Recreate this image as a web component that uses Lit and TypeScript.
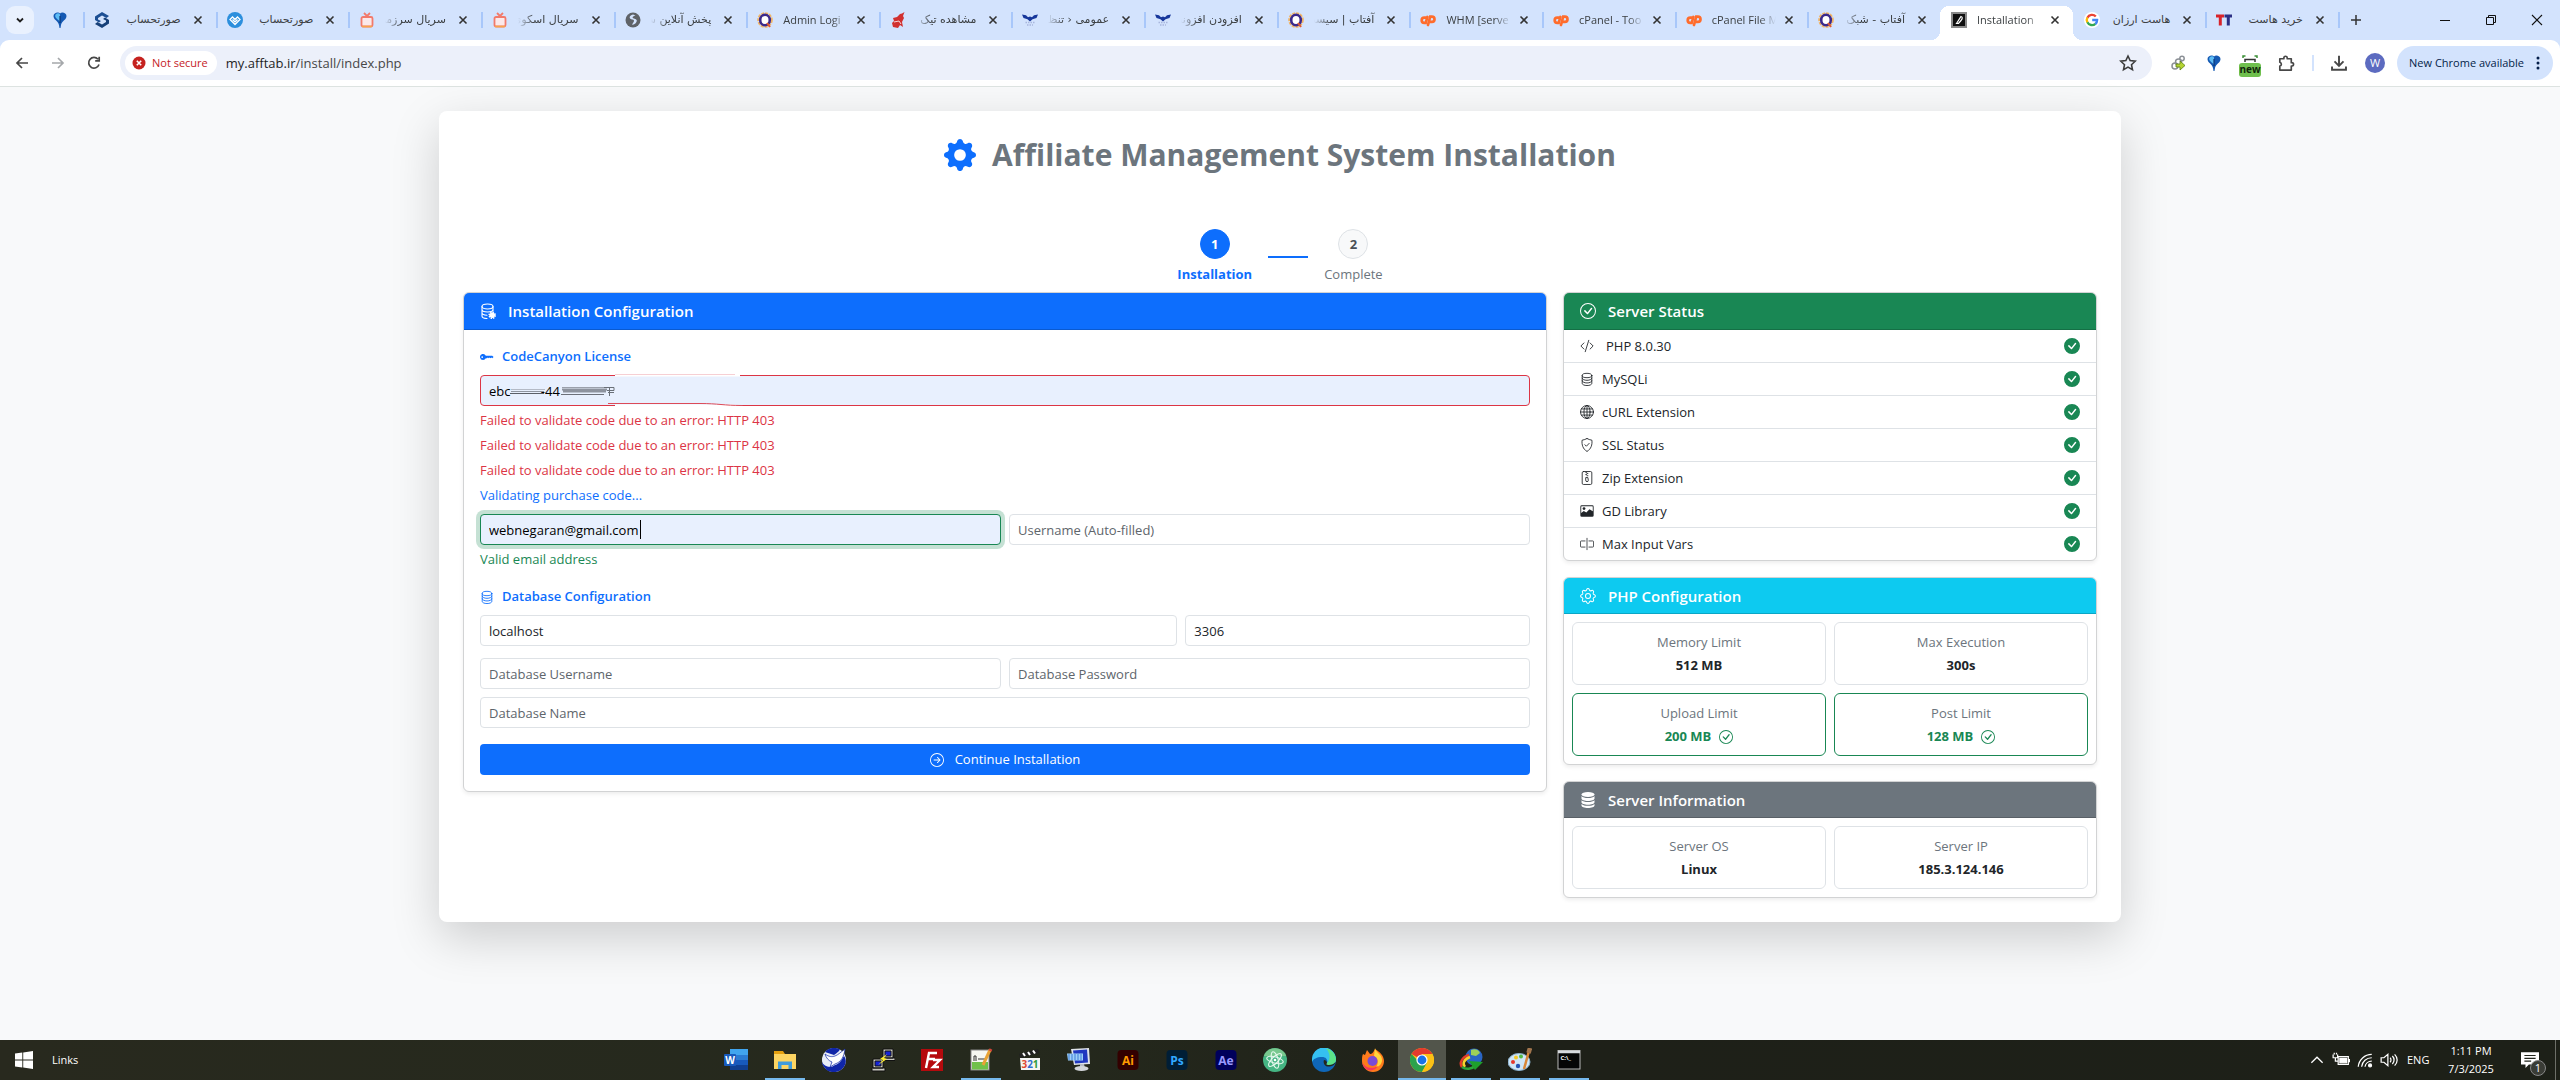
import { LitElement, html, svg, css, nothing, TemplateResult, SVGTemplateResult } from "lit";
import { customElement, property } from "lit/decorators.js";
import { classMap } from "lit/directives/class-map.js";

type Glyph = SVGTemplateResult;

const GEAR =
  "M9.405 1.05c-.413-1.4-2.397-1.4-2.81 0l-.1.34a1.464 1.464 0 0 1-2.105.872l-.31-.17c-1.283-.698-2.686.705-1.987 1.987l.169.311c.446.82.023 1.841-.872 2.105l-.34.1c-1.4.413-1.4 2.397 0 2.81l.34.1a1.464 1.464 0 0 1 .872 2.105l-.17.31c-.698 1.283.705 2.686 1.987 1.987l.311-.169a1.464 1.464 0 0 1 2.105.872l.1.34c.413 1.4 2.397 1.4 2.81 0l.1-.34a1.464 1.464 0 0 1 2.105-.872l.31.17c1.283.698 2.686-.705 1.987-1.987l-.169-.311a1.464 1.464 0 0 1 .872-2.105l.34-.1c1.4-.413 1.4-2.397 0-2.81l-.34-.1a1.464 1.464 0 0 1-.872-2.105l.17-.31c.698-1.283-.705-2.686-1.987-1.987l-.311.169a1.464 1.464 0 0 1-2.105-.872z";

const stroke = (inner: Glyph, w = 1) =>
  svg`<g fill="none" stroke="currentColor" stroke-width=${w} stroke-linecap="round" stroke-linejoin="round">${inner}</g>`;

/* Icons of the installer page, on a 16 unit grid. */
const ui: Record<string, Glyph> = {
  gearFill: svg`<path fill="currentColor" fill-rule="evenodd" d=${GEAR + "M8 10.93a2.929 2.929 0 1 1 0-5.86 2.929 2.929 0 0 1 0 5.86z"}/>`,
  gear: svg`<g transform="translate(.6 .6) scale(.925)" fill="none" stroke="currentColor" stroke-width="1.1"><path d=${GEAR}/><circle cx="8" cy="8" r="2.7"/></g>`,
  key: svg`<path fill="currentColor" d="M3.5 11.5a3.5 3.5 0 1 1 3.163-5H14L15.5 8 14 9.5l-1-1-1 1-1-1-1 1-1-1-1 1H6.663a3.5 3.5 0 0 1-3.163 2M2.5 9a1 1 0 1 0 0-2 1 1 0 0 0 0 2"/>`,
  database: stroke(svg`<ellipse cx="8" cy="4" rx="5.5" ry="2.5"/><path d="M2.5 4v9c0 1.4 2.5 2.5 5.5 2.5s5.5-1.1 5.5-2.5V4M2.5 7c0 1.4 2.5 2.5 5.5 2.5s5.5-1.1 5.5-2.5M2.5 10c0 1.4 2.5 2.5 5.5 2.5s5.5-1.1 5.5-2.5"/>`),
  databaseGear: svg`${stroke(svg`<ellipse cx="7.5" cy="3.5" rx="5.5" ry="2.5"/><path d="M2 3.500v9.500c0 1.300 2.200 2.400 5 2.500M13 3.500v4.500M2 6.500c0 1.400 2.500 2.500 5.500 2.500s5.500-1.100 5.500-2.500M2 9.800c0 1.300 2 2.300 5 2.500"/>`, 1.1)}<circle cx="12.2" cy="12.300" r="2.700" fill="currentColor"/><circle cx="12.200" cy="12.300" r="3" fill="none" stroke="currentColor" stroke-width="1.600" stroke-dasharray="1.400 .950"/>`,
  databaseFill: svg`<g fill="currentColor"><ellipse cx="8" cy="2.500" rx="6.500" ry="2.500"/><path d="M1.500 4v2.500C1.500 8 4.400 9 8 9s6.500-1 6.500-2.500V4C13.300 5.400 10.900 6 8 6s-5.300-.6-6.500-2M1.500 8.200v2.100c0 1.500 2.900 2.500 6.500 2.500s6.500-1 6.500-2.500V8.200C13.300 9.400 10.900 10 8 10s-5.300-.6-6.500-1.800M1.500 12v1.500C1.500 15 4.400 16 8 16s6.500-1 6.500-2.500V12c-1.200 1.300-3.600 1.800-6.500 1.800S2.700 13.300 1.500 12"/></g>`,
  check: svg`<path fill="currentColor" d="M8 15A7 7 0 1 1 8 1a7 7 0 0 1 0 14m0 1A8 8 0 1 0 8 0a8 8 0 0 0 0 16"/><path fill="currentColor" d="M10.970 4.970l-.02.022L7.477 9.417 5.384 7.323a.75.75 0 0 0-1.060 1.060L6.970 11.030a.75.75 0 0 0 1.079-.02l3.992-4.990a.75.75 0 0 0-1.071-1.050z"/>`,
  checkFill: svg`<path fill="currentColor" d="M16 8A8 8 0 1 1 0 8a8 8 0 0 1 16 0m-3.970-3.030a.75.75 0 0 0-1.080.022L7.477 9.417 5.384 7.323a.75.75 0 0 0-1.060 1.060L6.970 11.030a.75.75 0 0 0 1.079-.02l3.992-4.990a.75.75 0 0 0-.01-1.050z"/>`,
  code: stroke(svg`<path d="M10 1.500l-4 13M4.500 4.500L1 8l3.500 3.500M11.500 4.500L15 8l-3.500 3.500"/>`),
  globe: stroke(svg`<circle cx="8" cy="8" r="7.400"/><ellipse cx="8" cy="8" rx="3.500" ry="7.400"/><path d="M8 .6v14.800M.6 8h14.800M1.700 4.500h12.600M1.700 11.500h12.600"/>`),
  shield: stroke(svg`<path d="M8 .6c1.500.9 3.500 1.600 5.600 1.900.6 5.200-.9 10-5.600 12.900C3.300 12.500 1.800 7.700 2.400 2.500 4.500 2.200 6.500 1.500 8 .6zM5.600 7.700l1.700 1.700 3.200-3.300"/>`),
  zip: stroke(svg`<rect x="2.500" y=".6" width="11" height="14.800" rx="1.500"/><path d="M6.600 1.500h1M8 2.800h1M6.600 4.100h1M8 5.400h1M7 7.500h2l.5 3.200a1.500 1.500 0 0 1-3 0z"/>`),
  image: svg`<path fill="currentColor" d="M2 1.500h12a1.600 1.600 0 0 1 1.600 1.600v10a1.600 1.600 0 0 1-1.600 1.600H2A1.600 1.600 0 0 1 .4 13.100v-10A1.600 1.600 0 0 1 2 1.500m0 1a.6.6 0 0 0-.6.6v7.300L4.300 8l2.900 1.700 3.600-3.700 3.800 2.300V3.100a.6.6 0 0 0-.6-.6z"/><circle cx="4.600" cy="5.200" r="1.600" fill="currentColor"/>`,
  cursor: stroke(svg`<path d="M5.800 4.500H1.500a1 1 0 0 0-1 1v5a1 1 0 0 0 1 1h4.300M10.200 4.500h4.300a1 1 0 0 1 1 1v5a1 1 0 0 1-1 1h-4.300M8 1.500v13"/>`, 0.9),
  arrow: svg`<path fill="currentColor" fill-rule="evenodd" d="M1 8a7 7 0 1 0 14 0A7 7 0 0 0 1 8m15 0A8 8 0 1 1 0 8a8 8 0 0 1 16 0M4.500 7.500a.5.5 0 0 0 0 1h5.793l-2.147 2.146a.5.5 0 0 0 .708.708l3-3a.5.5 0 0 0 0-.708l-3-3a.5.5 0 1 0-.708.708L10.293 7.500z"/>`,
};

/* Favicons in the tab strip, on a 16 unit grid. */
const favorb = svg`<circle cx="8" cy="8" r="6.800" fill="none" stroke="#f2b565" stroke-width="2" stroke-dasharray="3 1"/><ellipse cx="8" cy="8" rx="4.800" ry="5.300" fill="#fff" stroke="#3b2a8c" stroke-width="2.600"/><path d="M10 11l3 4" stroke="#e2592f" stroke-width="2"/>`;
const favcp = svg`<g fill="none" stroke="#ff6c2c" stroke-width="2.700" stroke-linecap="round"><path d="M6.500 5.700H4.300a2.600 2.600 0 0 0 0 5.200h1.400L7.400 5"/><path d="M8 13L10.200 4.600h1.700a2.600 2.600 0 0 1 0 5.200h-1.700"/></g>`;
const favtv = svg`<g fill="none" stroke="#f27a6b" stroke-width="1.800" stroke-linejoin="round"><rect x="2.500" y="5" width="11" height="9.500" rx="1.500" fill="#fbe9ea"/><path d="M5 1l3 3 3-3"/></g><path d="M3 14.500h10" stroke="#f7a54a" stroke-width="1.500"/>`;
const favwing = svg`<path fill="#17379b" d="M0 2.500l4 .8 2 2L8 4.500l2 .8 2-2 4-.8-1.500 3.500-4 1.200L8 9.500 5.500 7.200l-4-1.200z"/><path stroke="#a9b6dd" stroke-width="1.300" stroke-dasharray="1.500 1" d="M3.500 10.500h9M5 13h6"/>`;
const balloon = svg`<path fill="#1459b3" d="M8 1.500c1.500-2 6.500-1 6.500 2.500 0 4-4.500 4.500-5.500 9L8.500 16h-1L7 13C6 8.500 1.500 8 1.500 4 1.500.5 6.500-.5 8 1.500z"/><path fill="#5dbcf4" d="M8 2.500c-1-2-4.800-1.500-4.800 1.300C3.200 6.500 6 7 8 10z"/><path d="M8 4v7" stroke="#0a3576" stroke-width="1.200"/>`;
const fav: Record<string, Glyph> = {
  orb: favorb,
  cp: favcp,
  tv: favtv,
  wing: favwing,
  balloon,
  swap: svg`<path fill="#1c4f94" d="M8 0l7 4-2.500 2L8 3.500 4 6v1.500l3 1.500-2 1.500L1 8V4.500z"/><path fill="#164079" d="M8 16l-7-4 2.500-2L8 12.500l4-2.500V8.500L9 7l2-1.500L15 8v3.500z"/>`,
  heart: svg`<circle cx="8" cy="8" r="8" fill="#2c8fdd"/><path fill="none" stroke="#fff" stroke-width="1.300" d="M8 12.500L3 7.500 5.500 5 8 7.500 10.500 5 13 7.500zM8 10L5.500 7.500M8 10l2.500-2.500"/>`,
  globe: svg`<circle cx="8" cy="8" r="7.500" fill="#5f6368"/><path fill="#d3e3fd" d="M8 2.500c-3 .5-4 2.500-3 4 1.500 1.300 3.500.5 4 2 .3 1.600-1.500 2-1.800 4.500 2.800-.5 4.800-2.500 4.600-4.700C11 6.500 8 7 7.600 5.500 7.500 4 9.500 4 10.500 3.500z"/>`,
  red: svg`<path fill="#d1302f" d="M14.500 0L13 4l1 2-2 4 1 5-3-2-2 3-5-1-1-4 2-2-1-3 4-1 3-3 2-.5z"/><path d="M4 10l5-1 2 3" stroke="#fff" stroke-width=".8" fill="none"/>`,
  leaf: svg`<rect width="16" height="16" fill="#8a8a8a"/><rect x="2" y="2" width="12" height="12" fill="#101010"/><path d="M5.500 11.500L10 4.500c1.800.3 1.500 2.500 0 4L7.500 11.500zM7 9l2-3" fill="none" stroke="#fff" stroke-width="1.200"/>`,
  google: svg`<circle cx="8" cy="8" r="8" fill="#fff"/><g fill="none" stroke-width="2.400"><path stroke="#ea4335" d="M11.800 4.500A5.200 5.200 0 0 0 3.400 5.700"/><path stroke="#fbbc05" d="M3.400 5.500a5.200 5.200 0 0 0 0 5"/><path stroke="#34a853" d="M3.400 10.300a5.200 5.200 0 0 0 8 1.600"/><path stroke="#4285f4" d="M11.300 12A5.200 5.200 0 0 0 13.100 8H8.200"/></g>`,
  tt: svg`<path fill="#d8232a" d="M0 2.500h8v3H5.800v8H2.800v-8H0z"/><path fill="#2b2f85" d="M8.500 2.500H16v3h-2.200v8h-3v-8H8.500z"/>`,
};

interface Tab { icon: string; title: string; rtl?: boolean; cut?: boolean; active?: boolean }
const tabs: Tab[] = [
  { icon: "swap", title: "صورتحساب", rtl: true },
  { icon: "heart", title: "صورتحساب", rtl: true },
  { icon: "tv", title: "سریال سرزمی", rtl: true, cut: true },
  { icon: "tv", title: "سریال اسکوی", rtl: true, cut: true },
  { icon: "globe", title: "پخش آنلاین ش", rtl: true, cut: true },
  { icon: "orb", title: "Admin Logi", cut: true },
  { icon: "red", title: "مشاهده تیک", rtl: true, cut: true },
  { icon: "wing", title: "عمومی ‹ تنظ", rtl: true, cut: true },
  { icon: "wing", title: "افزودن افزونه", rtl: true, cut: true },
  { icon: "orb", title: "آفتاب | سیست", rtl: true, cut: true },
  { icon: "cp", title: "WHM [serve", cut: true },
  { icon: "cp", title: "cPanel - Too", cut: true },
  { icon: "cp", title: "cPanel File M", cut: true },
  { icon: "orb", title: "آفتاب - شبک", rtl: true, cut: true },
  { icon: "leaf", title: "Installation", cut: true, active: true },
  { icon: "google", title: "هاست ارزان", rtl: true },
  { icon: "tt", title: "خرید هاست", rtl: true },
];

const CLOSE = svg`<path d="M4.500 4.500l7 7M11.500 4.500l-7 7" stroke="#333" stroke-width="1.600" fill="none"/>`;

const pic = (g: Glyph, cls = "i16", box = 16): TemplateResult =>
  html`<svg class=${cls} viewBox="0 0 ${box} ${box}" aria-hidden="true">${g}</svg>`;

@customElement("browser-tabs")
class BrowserTabs extends LitElement {
  static styles = css`
    :host { display: block; }
    .strip { display: flex; align-items: center; height: 40px; background: #d3e3fd; }
    svg { display: block; flex: none; }
    .i16 { width: 16px; height: 16px; }
    button { border: 0; padding: 0; background: none; font: inherit; display: grid; place-items: center; }
    .search { width: 28px; height: 28px; margin-left: 6px; border-radius: 9px; background: #e9f1fe; }
    .pinned { width: 49px; padding-left: 2px; box-sizing: border-box; display: grid; place-items: center; }
    .tabs { flex: 1; display: flex; min-width: 0; height: 40px; }
    .tab { flex: 1 1 0; min-width: 0; display: flex; align-items: center; height: 40px; padding: 0 10px 0 11px; gap: 5px; position: relative; box-sizing: border-box; }
    .tab > svg { margin-right: 5px; }
    .tab::before { content: ""; position: absolute; left: 0; top: 12px; width: 2px; height: 16px; background: #a8c7fa; }
    .tab.active::before, .tab.active + .tab::before { display: none; }
    .tab.active { background: linear-gradient(#fff, #fff) 0 6px / 100% 34px no-repeat; clip-path: inset(0 -9px 0 -9px); }
    .tab.active::after { content: ""; position: absolute; z-index: -1; }
    .corner { position: absolute; top: 6px; width: 9px; height: 9px; }
    .corner.l { left: 0; background: radial-gradient(circle at 100% 100%, #fff 9px, #d3e3fd 9px); }
    .corner.r { right: 0; background: radial-gradient(circle at 0 100%, #fff 9px, #d3e3fd 9px); }
    .flare { position: absolute; bottom: 0; width: 9px; height: 9px; }
    .flare.l { left: -9px; background: radial-gradient(circle at 0 0, transparent 9px, #fff 9px); }
    .flare.r { right: -9px; background: radial-gradient(circle at 100% 0, transparent 9px, #fff 9px); }
    .title { flex: 1; min-width: 0; overflow: hidden; white-space: nowrap; font: 11px/20px "Open Sans", "Noto Sans", sans-serif; color: #3c4043; }
    .title.rtl { direction: rtl; font-family: "DejaVu Sans", sans-serif; padding-right: 4px; }
    .title.cut { mask-image: linear-gradient(to right, #000 75%, transparent); }
    .title.cut.rtl { mask-image: linear-gradient(to left, #000 75%, transparent); }
    .new { width: 34px; height: 40px; border-left: 2px solid #a8c7fa; border-image: linear-gradient(transparent 12px, #a8c7fa 12px, #a8c7fa 28px, transparent 28px) 1; }
    .win { display: flex; margin-left: 50px; }
    .win button { width: 46px; height: 40px; }
  `;
  render() {
    return html`<div class="strip">
      <button class="search" aria-label="Search tabs">${pic(svg`<path d="M5 6.500l3 3 3-3" fill="none" stroke="#1f1f1f" stroke-width="1.800"/>`)}</button>
      <span class="pinned">${pic(fav.balloon)}</span>
      <div class="tabs">
        ${tabs.map((t) => html`<div class=${classMap({ tab: true, active: !!t.active })}>
          ${t.active ? html`<i class="corner l"></i><i class="corner r"></i><i class="flare l"></i><i class="flare r"></i>` : nothing}
          ${pic(fav[t.icon])}
          <span class=${classMap({ title: true, rtl: !!t.rtl, cut: !!t.cut })}>${t.title}</span>
          <button aria-label="Close">${pic(CLOSE)}</button>
        </div>`)}
      </div>
      <button class="new" aria-label="New tab">${pic(svg`<path d="M8 3v10M3 8h10" stroke="#333" stroke-width="1.500"/>`)}</button>
      <div class="win">
        <button aria-label="Minimize">${pic(svg`<path d="M3 8.500h10" stroke="#111"/>`)}</button>
        <button aria-label="Restore">${pic(svg`<path d="M3.500 5.500h7v7h-7zM5.500 5.500v-2h7v7h-2" fill="none" stroke="#111"/>`)}</button>
        <button aria-label="Close window">${pic(svg`<path d="M3 3l10 10M13 3L3 13" stroke="#111" stroke-width="1.100"/>`)}</button>
      </div>
    </div>`;
  }
}

@customElement("browser-toolbar")
class BrowserToolbar extends LitElement {
  static styles = css`
    :host { display: block; font: 11px/20px "Open Sans", "Noto Sans", sans-serif; background: #d3e3fd; }
    .bar { display: flex; align-items: center; height: 46px; background: #fff; border-bottom: 1px solid #dde3e1; border-radius: 9px 9px 0 0; padding-right: 7px; }
    svg { display: block; flex: none; }
    .i16 { width: 16px; height: 16px; }
    .i18 { width: 18px; height: 18px; }
    button { border: 0; padding: 0; background: none; font: inherit; display: grid; place-items: center; }
    .nav { display: flex; margin-left: 4px; width: 116px; }
    .nav button { width: 36px; height: 34px; }
    .omni { flex: 1; display: flex; align-items: center; height: 34px; border-radius: 17px; background: #ecf0fa; padding: 0 15px 0 5px; }
    .chip { display: flex; align-items: center; gap: 5px; height: 24px; border-radius: 12px; background: #fff; color: #c5221f; padding: 0 9px 0 6px; font-weight: 500; }
    .url { flex: 1; margin-left: 9px; font-size: 13px; color: #474747; }
    .url b { font-weight: 400; color: #1f1f1f; }
    .ext { display: flex; align-items: center; margin-left: 8px; }
    .ext > * { width: 36px; height: 34px; display: grid; place-items: center; }
    .ext .sep { width: 17px; }
    .sep::before { content: ""; width: 2px; height: 16px; background: #d3e3fd; }
    .badge { position: relative; }
    .badge b { position: absolute; left: 7px; top: 17px; width: 22px; height: 14px; border-radius: 3px; background: #6fbf4d; color: #10250a; font: 700 10px/13px "Open Sans", sans-serif; text-align: center; }
    .me { width: 20px; height: 20px; border-radius: 50%; background: #5c6bc0; color: #fff; line-height: 20px; text-align: center; }
    .update { height: 34px; border-radius: 17px; background: #d3e3fd; color: #041e49; display: flex; align-items: center; gap: 6px; padding: 0 7px 0 12px; margin-left: 4px; font-weight: 500; }
  `;
  render() {
    const line = (d: string, c = "#474747") => svg`<path d=${d} fill="none" stroke=${c} stroke-width="1.700"/>`;
    return html`<div class="bar">
      <div class="nav">
        <button aria-label="Back">${pic(line("M14 8H3M8 3L3 8l5 5"))}</button>
        <button aria-label="Forward">${pic(line("M2 8h11M8 3l5 5-5 5", "#a5a8ab"))}</button>
        <button aria-label="Reload">${pic(line("M13 9.500A5.300 5.300 0 1 1 12 4.300M13.200 1.800v4H9.200"))}</button>
      </div>
      <div class="omni">
        <button class="chip">${pic(svg`<circle cx="8" cy="8" r="6.500" fill="#c5221f"/><path d="M5.800 5.800l4.400 4.400M10.200 5.800l-4.400 4.400" stroke="#fff" stroke-width="1.600"/>`)}<span>Not secure</span></button>
        <span class="url"><b>my.afftab.ir</b>/install/index.php</span>
        ${pic(svg`<path d="M8 1.800l1.900 4.100 4.500.5-3.300 3.100.9 4.500-4-2.300L4 14l.9-4.500L1.600 6.400l4.500-.5z" fill="none" stroke="#3c3c3c" stroke-width="1.400"/>`, "i18")}
      </div>
      <div class="ext">
        <span>${pic(svg`<g fill="none" stroke="#8b9096" stroke-width="1.500"><circle cx="5" cy="11" r="3"/><circle cx="8.500" cy="7" r="3"/><circle cx="12" cy="3.500" r="2.200"/></g><path d="M6 9h4V6l5 4.500-5 4.500v-3H6z" fill="#b5d432" stroke="#5a7d14" stroke-width=".8"/>`)}</span>
        <span>${pic(balloon)}</span>
        <span class="badge">${pic(svg`<path d="M1 3V1h2.500M12.500 1H15v2" fill="none" stroke="#3a8f36" stroke-width="1.500"/><path d="M3 7V4.500h10V7" fill="none" stroke="#333" stroke-width="1.500"/>`)}<b>new</b></span>
        <button aria-label="Extensions">${pic(svg`<path d="M2.500 4.200h3.600V3.500a1.500 1.500 0 0 1 3 0v.7h3.600v3.500h.5a1.500 1.500 0 0 1 0 3h-.5v3.600H2.500v-3.500a1.800 1.800 0 0 0 0-3.500z" fill="none" stroke="#474747" stroke-width="1.500" stroke-linejoin="round"/>`, "i18")}</button>
        <span class="sep"></span>
        <button aria-label="Downloads">${pic(svg`<path d="M8 1.500v8.500M4 6.500L8 10.500l4-4M1.800 11v3h12.400v-3" fill="none" stroke="#474747" stroke-width="1.700"/>`, "i18")}</button>
        <span><span class="me">W</span></span>
      </div>
      <button class="update"><span>New Chrome available</span>${pic(svg`<g fill="#041e49"><circle cx="8" cy="3" r="1.500"/><circle cx="8" cy="8" r="1.500"/><circle cx="8" cy="13" r="1.500"/></g>`)}</button>
    </div>`;
  }
}

@customElement("panel-card")
class PanelCard extends LitElement {
  @property() heading = "";
  @property() icon = "check";
  @property() tone = "primary";
  static styles = css`
    :host { display: block; }
    .card { border: 1px solid #d2d3d4; border-radius: 6px; background: #fff; box-shadow: 0 2px 4px rgba(0, 0, 0, .075); overflow: hidden; }
    .head { display: flex; align-items: center; gap: 12px; height: 36px; padding: 0 16px; color: #fff; font-weight: 600; border-bottom: 1px solid rgba(0, 0, 0, .176); box-sizing: border-box; }
    .head svg { width: 16px; height: 16px; flex: none; }
    h2 { margin: 0; font-size: 15px; line-height: 20px; font-weight: 600; }
    .primary { background: #0d6efd; height: 37px; }
    .success { background: #198754; height: 37px; }
    .info { background: #0dcaf0; }
    .secondary { background: #6c757d; }
  `;
  render() {
    return html`<section class="card">
      <header class="head ${this.tone}">${pic(ui[this.icon])}<h2>${this.heading}</h2></header>
      <slot></slot>
    </section>`;
  }
}

@customElement("install-page")
class InstallPage extends LitElement {
  static styles = css`
    :host { display: block; padding: 24px 12px; font: 13px/21px "Open Sans", "Noto Sans", sans-serif; color: #212529; }
    .sheet { max-width: 1634px; margin: 0 auto; padding: 24px; background: #fff; border-radius: 8px; box-shadow: 0 16px 48px rgba(0, 0, 0, .175); }
    svg { display: block; flex: none; }
    .i16 { width: 16px; height: 16px; }
    .i14 { width: 14px; height: 14px; }
    .i32 { width: 32px; height: 32px; color: #0d6efd; }
    .title { display: flex; justify-content: center; align-items: center; gap: 16px; height: 40px; margin-bottom: 54px; }
    h1 { margin: 0; font-size: 30px; line-height: 40px; font-weight: 700; color: #6c757d; }
    .steps { display: flex; justify-content: center; align-items: center; gap: 16px; margin-bottom: 7px; }
    .step { display: flex; flex-direction: column; align-items: center; gap: 5px; color: #6c757d; }
    .dot { width: 30px; height: 30px; box-sizing: border-box; border: 1px solid #dee2e6; border-radius: 50%; background: #f8f9fa; color: #495057; display: grid; place-items: center; font-weight: 700; }
    .step.on { color: #0d6efd; font-weight: 700; }
    .step.on .dot { background: #0d6efd; border-color: #0d6efd; color: #fff; }
    .link { width: 40px; height: 2px; background: #0d6efd; }
    .cols { display: grid; grid-template-columns: repeat(12, minmax(0, 1fr)); gap: 16px; align-items: start; }
    .main { grid-column: span 8; }
    .side { grid-column: span 4; display: grid; gap: 16px; }
    form { padding: 16px; }
    h3 { display: flex; align-items: center; gap: 8px; margin: 0 0 8px; font-size: 13px; line-height: 21px; font-weight: 600; color: #0d6efd; }
    .grid { display: grid; grid-template-columns: repeat(12, minmax(0, 1fr)); gap: 8px; align-items: start; }
    .w4 { grid-column: span 4; }
    .w6 { grid-column: span 6; }
    .w8 { grid-column: span 8; }
    .w12 { grid-column: span 12; }
    .first { margin-bottom: 16px; }
    .second { margin-bottom: 12px; }
    .third { margin-bottom: 16px; }
    .field { position: relative; }
    input { display: block; width: 100%; height: 31px; box-sizing: border-box; border: 1px solid #dee2e6; border-radius: 4px; padding: 4px 8px; background: #fff; font: inherit; color: #212529; outline: 0; }
    input::placeholder { color: #5e656b; opacity: 1; }
    .filled { background: #e8f0fe; color: #000; }
    .bad { border-color: #dc3545; }
    .good { border-color: #198754; box-shadow: 0 0 0 4px rgba(25, 135, 84, .25); }
    .caret { position: absolute; left: 160px; top: 6px; width: 1px; height: 19px; background: #000; }
    .smudge { position: absolute; left: 0; top: -4px; width: 300px; height: 39px; }
    .msg { margin: 4px 0 0; }
    .msg.bad { color: #dc3545; }
    .msg.busy { color: #0d6efd; }
    .msg.good { color: #198754; box-shadow: none; }
    .submit { width: 100%; height: 31px; border: 0; border-radius: 4px; background: #0d6efd; color: #fff; font: inherit; display: flex; align-items: center; justify-content: center; gap: 11px; }
    ul { list-style: none; margin: 0; padding: 0; }
    li { display: flex; align-items: center; gap: 8px; height: 32px; padding: 0 16px; border-bottom: 1px solid #dee2e6; }
    li:last-child { border-bottom: 0; }
    li span { flex: 1; }
    li .wide { padding-left: 4px; }
    .ok { color: #198754; }
    .tiles { display: grid; grid-template-columns: 1fr 1fr; gap: 8px; padding: 8px; }
    .tile { border: 1px solid #dee2e6; border-radius: 6px; padding: 9px 8px 8px; display: grid; gap: 2px; justify-items: center; }
    .tile.hit { border-color: #198754; }
    .tile.hit b { color: #198754; }
    .tile span { color: #6c757d; }
    .tile b { display: flex; align-items: center; gap: 8px; }
  `;

  private tile(label: string, value: string, hit = false) {
    return html`<div class=${classMap({ tile: true, hit })}><span>${label}</span><b>${value}${hit ? pic(ui.check, "i14") : nothing}</b></div>`;
  }

  render() {
    const nb = "\u00a0";
    const license = "ebc" + nb.repeat(9) + "-44" + nb.repeat(13);
    const checks: [string, string][] = [
      ["code", "PHP 8.0.30"], ["database", "MySQLi"], ["globe", "cURL Extension"], ["shield", "SSL Status"],
      ["zip", "Zip Extension"], ["image", "GD Library"], ["cursor", "Max Input Vars"],
    ];
    return html`<main class="sheet">
      <div class="title">${pic(ui.gearFill, "i32")}<h1>Affiliate Management System Installation</h1></div>
      <div class="steps">
        <div class="step on"><span class="dot">1</span><span>Installation</span></div>
        <i class="link"></i>
        <div class="step"><span class="dot">2</span><span>Complete</span></div>
      </div>
      <div class="cols">
        <panel-card class="main" heading="Installation Configuration" icon="databaseGear" tone="primary">
          <form>
            <h3>${pic(ui.key, "i14")}CodeCanyon License</h3>
            <div class="grid first">
              <div class="w12">
                <div class="field">
                  <input class="filled bad" aria-label="CodeCanyon License" .value=${license}>
                  <svg class="smudge" viewBox="0 0 300 39" aria-hidden="true">
                    <g fill="none">
                      <path d="M31 18.500h34" stroke="#b4bac6"/><path d="M31 20.500h33" stroke="#8f959f"/><path d="M30 22.500h34" stroke="#5b6068"/>
                      <path d="M82 16.500h43" stroke="#9aa0ab"/><path d="M82 18.500h45M83 20.500h43" stroke="#8d939e" stroke-width="2"/><path d="M81 23.500h43" stroke="#6b7079"/>
                      <path d="M124 16.500h10v3h-7M129.500 25v-8M128 21.500h6" stroke="#6a7078"/>
                      <path d="M135 4.500h125" stroke="#fff"/><path d="M135 3.500h120" stroke="#f6cfd3"/><path d="M135 5.500h125" stroke="#f4f7fe"/>
                      <path d="M135 33.500h118l10 1.500H135z" fill="#fff"/><path d="M128 32.500h92c18 0 24 2 42 2" stroke="#dc4a58"/>
                    </g>
                  </svg>
                </div>
                <p class="msg bad">Failed to validate code due to an error: HTTP 403</p>
                <p class="msg bad">Failed to validate code due to an error: HTTP 403</p>
                <p class="msg bad">Failed to validate code due to an error: HTTP 403</p>
                <p class="msg busy">Validating purchase code...</p>
              </div>
              <div class="w6">
                <div class="field"><input class="filled good" type="email" aria-label="Email" .value=${"webnegaran@gmail.com"}><i class="caret"></i></div>
                <p class="msg good">Valid email address</p>
              </div>
              <div class="w6"><input aria-label="Username" placeholder="Username (Auto-filled)"></div>
            </div>
            <h3>${pic(ui.database, "i14")}Database Configuration</h3>
            <div class="grid second">
              <div class="w8"><input aria-label="Database Host" .value=${"localhost"}></div>
              <div class="w4"><input aria-label="Database Port" .value=${"3306"}></div>
            </div>
            <div class="grid third">
              <div class="w6"><input aria-label="Database Username" placeholder="Database Username"></div>
              <div class="w6"><input type="password" aria-label="Database Password" placeholder="Database Password"></div>
              <div class="w12"><input aria-label="Database Name" placeholder="Database Name"></div>
            </div>
            <button class="submit" type="button">${pic(ui.arrow, "i14")}<span>Continue Installation</span></button>
          </form>
        </panel-card>
        <div class="side">
          <panel-card heading="Server Status" icon="check" tone="success">
            <ul>
              ${checks.map(([icon, label], i) => html`<li>${pic(ui[icon], "i14")}<span class=${i === 0 ? "wide" : ""}>${label}</span>${pic(ui.checkFill, "i16 ok")}</li>`)}
            </ul>
          </panel-card>
          <panel-card heading="PHP Configuration" icon="gear" tone="info">
            <div class="tiles">
              ${this.tile("Memory Limit", "512 MB")}${this.tile("Max Execution", "300s")}
              ${this.tile("Upload Limit", "200 MB", true)}${this.tile("Post Limit", "128 MB", true)}
            </div>
          </panel-card>
          <panel-card heading="Server Information" icon="databaseFill" tone="secondary">
            <div class="tiles">${this.tile("Server OS", "Linux")}${this.tile("Server IP", "185.3.124.146")}</div>
          </panel-card>
        </div>
      </div>
    </main>`;
  }
}

/* Taskbar pictures, on a 24 unit grid. */
const letters = (t: string, bg: string, fg: string) =>
  svg`<rect x="1.500" y="2" width="21" height="20" rx="4" fill=${bg}/><text x="12" y="16.500" text-anchor="middle" font-size="12" font-weight="700" fill=${fg}>${t}</text>`;
interface App { name: string; art: Glyph; open?: boolean; front?: boolean }
const apps: App[] = [
  { name: "Word", art: svg`<rect x="6" y="1" width="18" height="6" fill="#41a5ee"/><rect x="6" y="7" width="18" height="5" fill="#2b7cd3"/><rect x="6" y="12" width="18" height="5" fill="#185abd"/><rect x="6" y="17" width="18" height="5" fill="#103f91"/><rect y="6" width="12" height="12" rx="1" fill="#185abd"/><text x="6" y="16" text-anchor="middle" font-size="10" font-weight="700" fill="#fff">W</text>` },
  { name: "Files", open: true, art: svg`<path fill="#e5a010" d="M1 3h9l2 3h-11z"/><path fill="#fcd462" d="M1 6h22v15H1z"/><path fill="#3f9bdc" d="M5 13.500h14V21h-3.500v-4h-7v4H5z"/>` },
  { name: "Mail bird", art: svg`<circle cx="12" cy="12" r="12" fill="#e8ecf7"/><path fill="#1026a8" d="M3 4C7-1 14-1 18 1.500c-2 3-4 4-6 5.500-3-1-6-2-9-3z"/><path fill="#1026a8" d="M0 14c2 4 8 7 13 3 5-1 7-6 9-9 3 4 2 9-1 12-5 6-15 5-18 0-2-2-3-4-3-6z"/><path fill="#fff" stroke="#1026a8" stroke-width=".7" d="M23 1c-1 8-4 13-10 15l-5 3 2-5c-3-1-6-4-7-8 4 3 7 3 10 2 3-1 6-4 10-7z"/>` },
  { name: "PuTTY", art: svg`<g stroke="#111" stroke-width="1"><path fill="#c9c9c0" d="M12 1h10v9H12zM2 11h10v9H2zM1 20h13v3H1zM11 10h13v2.500H11z"/><path fill="#1424d8" d="M14 3h6v5h-6zM4 13h6v5H4z"/></g><path fill="#ffee2e" d="M16 6l-7 5 3 1-5 5 9-6-3-1z"/>` },
  { name: "FileZilla", art: svg`<rect x="1" y="1" width="22" height="22" fill="#b50a0d"/><g fill="none" stroke="#fff" stroke-width="2.400"><path d="M6 20L9 5h8M8 11h7"/><path d="M13 12h7l-7 7h6"/></g>` },
  { name: "Notepad++", open: true, art: svg`<rect x="2" y="2" width="18" height="20" fill="#f6f7f2" stroke="#888"/><path fill="#58b72d" d="M3 14h16v7.500H3z" opacity=".85"/><path d="M5 13V8h2v5M9 11h8" stroke="#333" fill="none"/><path d="M21 2l-7 15" stroke="#e9a336" stroke-width="3"/><path d="M22 1l-1 2" stroke="#d6453a" stroke-width="3"/>` },
  { name: "Media player", art: svg`<path fill="#f4f4f4" d="M2 10h20v12H3z"/><path fill="#222" d="M1 6l19-5 1 4L2 10z"/><path d="M5 5l2 3M10 4l2 3M15 2.500l2 3" stroke="#fff" stroke-width="2"/><text x="12" y="20" text-anchor="middle" font-size="10" font-weight="700"><tspan fill="#e0482f">3</tspan><tspan fill="#2f6fd0">2</tspan><tspan fill="#2f9a3d">1</tspan></text>` },
  { name: "Remote desktop", art: svg`<path fill="#dfe3ea" d="M4 1l18-1 1 16-16 1z"/><path fill="#2038c0" d="M6 2.500l14-1 1 13-13 1z"/><path fill="#9fd0f8" d="M0 5.500h16v7H1z"/><path d="M1 7h14M1 9h14M1 11h14" stroke="#3d7dd6" stroke-dasharray="2 1"/><path fill="#b9bec6" d="M13 16h4l1 4h-5z"/><ellipse cx="14.500" cy="20.500" rx="7" ry="2.500" fill="#d3d6db"/>` },
  { name: "Illustrator", art: letters("Ai", "#330000", "#ff9a00") },
  { name: "Photoshop", art: letters("Ps", "#001e36", "#31a8ff") },
  { name: "After Effects", art: letters("Ae", "#00005b", "#9999ff") },
  { name: "Atom", art: svg`<circle cx="12" cy="12" r="12" fill="#45b583"/><path d="M.8 8A12 12 0 0 1 23.200 8z" fill="#8fd093" opacity=".7"/><g fill="none" stroke="#e5f7ec" stroke-width="1.100"><ellipse cx="12" cy="12" rx="8.500" ry="3.200" transform="rotate(15 12 12)"/><ellipse cx="12" cy="12" rx="8.500" ry="3.200" transform="rotate(75 12 12)"/><ellipse cx="12" cy="12" rx="8.500" ry="3.200" transform="rotate(135 12 12)"/></g><circle cx="12" cy="12" r="1.300" fill="#fff"/>` },
  { name: "Edge", art: svg`<circle cx="12" cy="12" r="12" fill="#0f67b8"/><path fill="#35c1f1" d="M0 12A12 12 0 0 1 24 11c0 4-3 6-7 6-3 0-3-1-2-2 1-2 0-6-5-6-5 0-9 2-10 5z"/><path fill="#66eb6e" d="M14 .2A12 12 0 0 1 24 11c0 4-3 6-7 6-3 0-3-1-2-2 4-4 3-10-1-14.800z" opacity=".8"/><path fill="#24271d" d="M15 15c-1 1-1 2 2 2 3 0 5-1 6.500-3-1 4-5 5-8 4.500C12 18 11 14 12 12c2 0 3 1.500 3 3z"/>` },
  { name: "Firefox", art: svg`<path fill="#ff7b1c" d="M2 6l2 1 2-5 3 4c2 0 3-1 5-5 5 3 9 7 9 12a11 11 0 0 1-22 0c0-3 0-5 1-7z"/><path fill="#ffd53c" d="M14 0c1 5 7 6 7 12 0 4-3 7-6 7 3-4 2-9-2-11z"/><circle cx="11.500" cy="13" r="5" fill="#7a4bd6"/><path fill="#f8385b" d="M1 14c2 5 9 8 16 4-3 6-14 7-16-4z"/>` },
  { name: "Chrome", open: true, front: true, art: svg`<circle cx="12" cy="12" r="12" fill="#fbc116"/><path fill="#e33b2e" d="M1.600 6A12 12 0 0 1 22.400 6H12v6z"/><path fill="#2ba24c" d="M1.600 6A12 12 0 0 0 12 24l5-9-8-1z"/><path fill="#fbc116" d="M12 24A12 12 0 0 0 22.400 6H12l5 9z"/><circle cx="12" cy="12" r="5.600" fill="#fff"/><circle cx="12" cy="12" r="4.400" fill="#1a73e8"/>` },
  { name: "Download manager", open: true, art: svg`<circle cx="15" cy="9" r="8.500" fill="#2a65c4"/><path fill="#9fd058" d="M12 2c4-2 8 0 9 3l-4 3-5-1z"/><g fill="none" stroke-width="2.500"><path stroke="#e23a2a" d="M10 7c-7 2-10 8-7 12"/><path stroke="#f7d12c" d="M11 9c-6 2-8 7-5 10"/><path stroke="#2ea53a" d="M3 19c4 3 10 2 13-1"/></g><path fill="#1fa02c" d="M10 13l14 1-8 8z"/>` },
  { name: "Paint", open: true, art: svg`<ellipse cx="11" cy="14" rx="11" ry="8.500" fill="#cfe6f7" stroke="#8bb2cf"/><circle cx="5" cy="14" r="2" fill="#e5382c"/><circle cx="8" cy="9.500" r="2" fill="#f5c928"/><circle cx="13" cy="8.500" r="2" fill="#52b944"/><circle cx="10" cy="18" r="2.200" fill="#2453b5"/><path d="M21 3l-5 18" stroke="#d98636" stroke-width="2.500"/><path d="M22 0l-1.500 5" stroke="#a2754d" stroke-width="4.500"/>` },
  { name: "Command prompt", open: true, art: svg`<rect x="1" y="2.500" width="22" height="18.500" fill="#050505" stroke="#b8b8b8"/><path d="M1 4h22" stroke="#d6d9dd" stroke-width="2.500"/><text x="3.500" y="12" font-size="6" font-weight="700" fill="#fff">C:\\_</text>` },
];

@customElement("task-bar")
class TaskBar extends LitElement {
  static styles = css`
    :host { display: block; font: 11px/18px "Open Sans", "Noto Sans", sans-serif; color: #fff; }
    .bar { display: flex; height: 40px; background: linear-gradient(90deg, #28291e, #25291d 40%, #1e2018 60%, #1d2018); }
    svg { display: block; font-family: "Open Sans", "Noto Sans", sans-serif; }
    button { border: 0; padding: 0; background: none; color: inherit; font: inherit; display: grid; place-items: center; }
    .left { flex: 0 1 712px; display: flex; align-items: center; }
    .left button { width: 48px; height: 40px; margin-right: 4px; }
    .i16 { width: 18px; height: 18px; }
    .apps { display: flex; gap: 1px; }
    .app { width: 48px; height: 40px; box-sizing: border-box; position: relative; }
    .art { width: 24px; height: 24px; }
    .open::after { content: ""; position: absolute; left: 4px; right: 4px; bottom: 0; height: 2px; background: #76b9ed; }
    .front { background: #52554b; }
    .front::after { left: 0; right: 0; }
    .tray { margin-left: auto; display: flex; align-items: center; }
    .tray > button { width: 24px; height: 40px; }
    .lang { margin-left: 6px; width: 25px; }
    .clock { width: 68px; margin-left: 5px; text-align: center; }
    .note { position: relative; }
    .tray > button.note { width: 50px; }
    .count { position: absolute; left: 25px; top: 20px; width: 16px; height: 16px; box-sizing: border-box; border: 1px solid #888; border-radius: 50%; background: #3a3c36; line-height: 14px; text-align: center; }
    .edge { width: 4px; height: 40px; border-left: 1px solid #6d6f68; }
  `;
  render() {
    const w = (g: Glyph) => pic(svg`<g fill="none" stroke="#fff" stroke-width="1.100">${g}</g>`);
    return html`<footer class="bar">
      <div class="left">
        <button aria-label="Start">${pic(svg`<path fill="#fff" d="M0 2.300L6.500 1.400v6.200H0zM7.300 1.300L16 0v7.600H7.300zM0 8.400h6.500v6.200L0 13.700zM7.300 8.400H16V16l-8.700-1.300z"/>`)}</button>
        <span>Links</span>
      </div>
      <nav class="apps">
        ${apps.map((a) => html`<button class=${classMap({ app: true, open: !!a.open, front: !!a.front })} aria-label=${a.name}>${pic(a.art, "art", 24)}</button>`)}
      </nav>
      <div class="tray">
        <button aria-label="Hidden icons">${w(svg`<path d="M3 10.500l5-5 5 5"/>`)}</button>
        <button aria-label="Battery">${w(svg`<path d="M5.500 5h9v7h-9zM15.500 7v3M1 3v3h4V3M2 1.500V3M4 1.500V3M3 6v3h2"/><path fill="#fff" d="M7 6.500h6v4H7z"/>`)}</button>
        <button aria-label="Network">${w(svg`<path d="M2 14A12 12 0 0 1 14 3M5 14a9 9 0 0 1 9-8M8 14a6 6 0 0 1 6-5"/><circle cx="12.500" cy="12.800" r="1.300" fill="#fff"/>`)}</button>
        <button aria-label="Volume">${w(svg`<path d="M1 6h2.500L7 3v10l-3.500-3H1zM9 6c1 1 1 3 0 4M11 4.500c2 2 2 5 0 7M13 3c3 3 3 7 0 10"/>`)}</button>
        <span class="lang">ENG</span>
        <div class="clock">1:11 PM<br>7/3/2025</div>
        <button class="note" aria-label="Notifications">${pic(svg`<path fill="#fff" d="M0 1h16v11H7l-3 3v-3H0z"/><path d="M3 4h10M3 6.500h10M3 9h6" stroke="#22251c"/>`)}<span class="count">1</span></button>
        <i class="edge"></i>
      </div>
    </footer>`;
  }
}

@customElement("app-root")
class AppRoot extends LitElement {
  static styles = css`
    :host { display: flex; flex-direction: column; min-height: 100vh; background: #f8f9fa; }
    install-page { flex: 1; }
  `;
  render() {
    return html`<browser-tabs></browser-tabs><browser-toolbar></browser-toolbar><install-page></install-page><task-bar></task-bar>`;
  }
}
